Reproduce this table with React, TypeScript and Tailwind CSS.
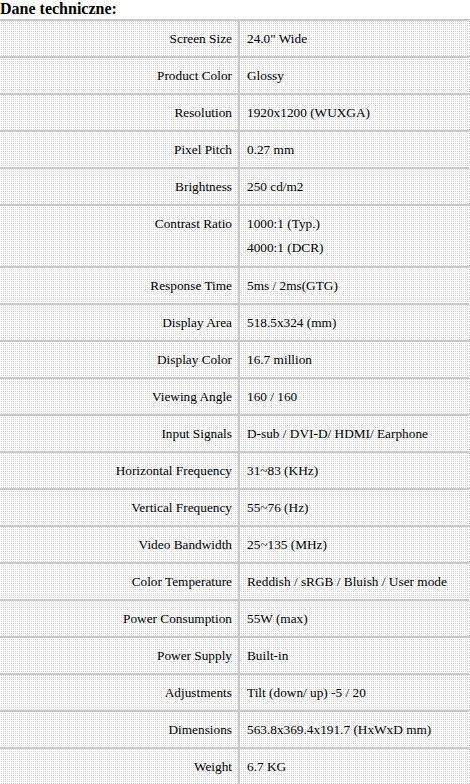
const specs: [string, string[]][] = [
  ["Screen Size", ['24.0" Wide']],
  ["Product Color", ["Glossy"]],
  ["Resolution", ["1920x1200 (WUXGA)"]],
  ["Pixel Pitch", ["0.27 mm"]],
  ["Brightness", ["250 cd/m2"]],
  ["Contrast Ratio", ["1000:1 (Typ.)", "4000:1 (DCR)"]],
  ["Response Time", ["5ms / 2ms(GTG)"]],
  ["Display Area", ["518.5x324 (mm)"]],
  ["Display Color", ["16.7 million"]],
  ["Viewing Angle", ["160 / 160"]],
  ["Input Signals", ["D-sub / DVI-D/ HDMI/ Earphone"]],
  ["Horizontal Frequency", ["31~83 (KHz)"]],
  ["Vertical Frequency", ["55~76 (Hz)"]],
  ["Video Bandwidth", ["25~135 (MHz)"]],
  ["Color Temperature", ["Reddish / sRGB / Bluish / User mode"]],
  ["Power Consumption", ["55W (max)"]],
  ["Power Supply", ["Built-in"]],
  ["Adjustments", ["Tilt (down/ up) -5 / 20"]],
  ["Dimensions", ["563.8x369.4x191.7 (HxWxD mm)"]],
  ["Weight", ["6.7 KG"]],
];

export default function App() {
  return (
    <div className="w-[470px] bg-white text-black font-['Liberation_Serif',serif]">
      <h2 className="h-[19px] text-[16px] font-bold leading-[17px]">Dane techniczne:</h2>
      <div className="border-t-2 border-[#c8c8c8] bg-[conic-gradient(#d6d6d6_25%,#ffffff_0)] bg-size-[2px_2px]">
        {specs.map(([label, values]) => {
          const multi = values.length > 1;
          return (
            <div key={label} className="grid grid-cols-[240px_1fr] border-b-2 border-[#c8c8c8] text-[13.3px]">
              <div
                className={
                  multi
                    ? "flex items-start justify-end border-r-2 border-[#c8c8c8] pr-[6px] pt-[6px] leading-[24px]"
                    : "flex items-center justify-end border-r-2 border-[#c8c8c8] pr-[6px] min-h-[35px]"
                }
              >
                {label}
              </div>
              <div
                className={
                  multi
                    ? "flex flex-col justify-center pl-[7px] py-[6px] leading-[24px]"
                    : "flex flex-col justify-center pl-[7px] leading-[24px] min-h-[35px]"
                }
              >
                {values.map((v) => (
                  <span key={v}>{v}</span>
                ))}
              </div>
            </div>
          );
        })}
      </div>
    </div>
  );
}
